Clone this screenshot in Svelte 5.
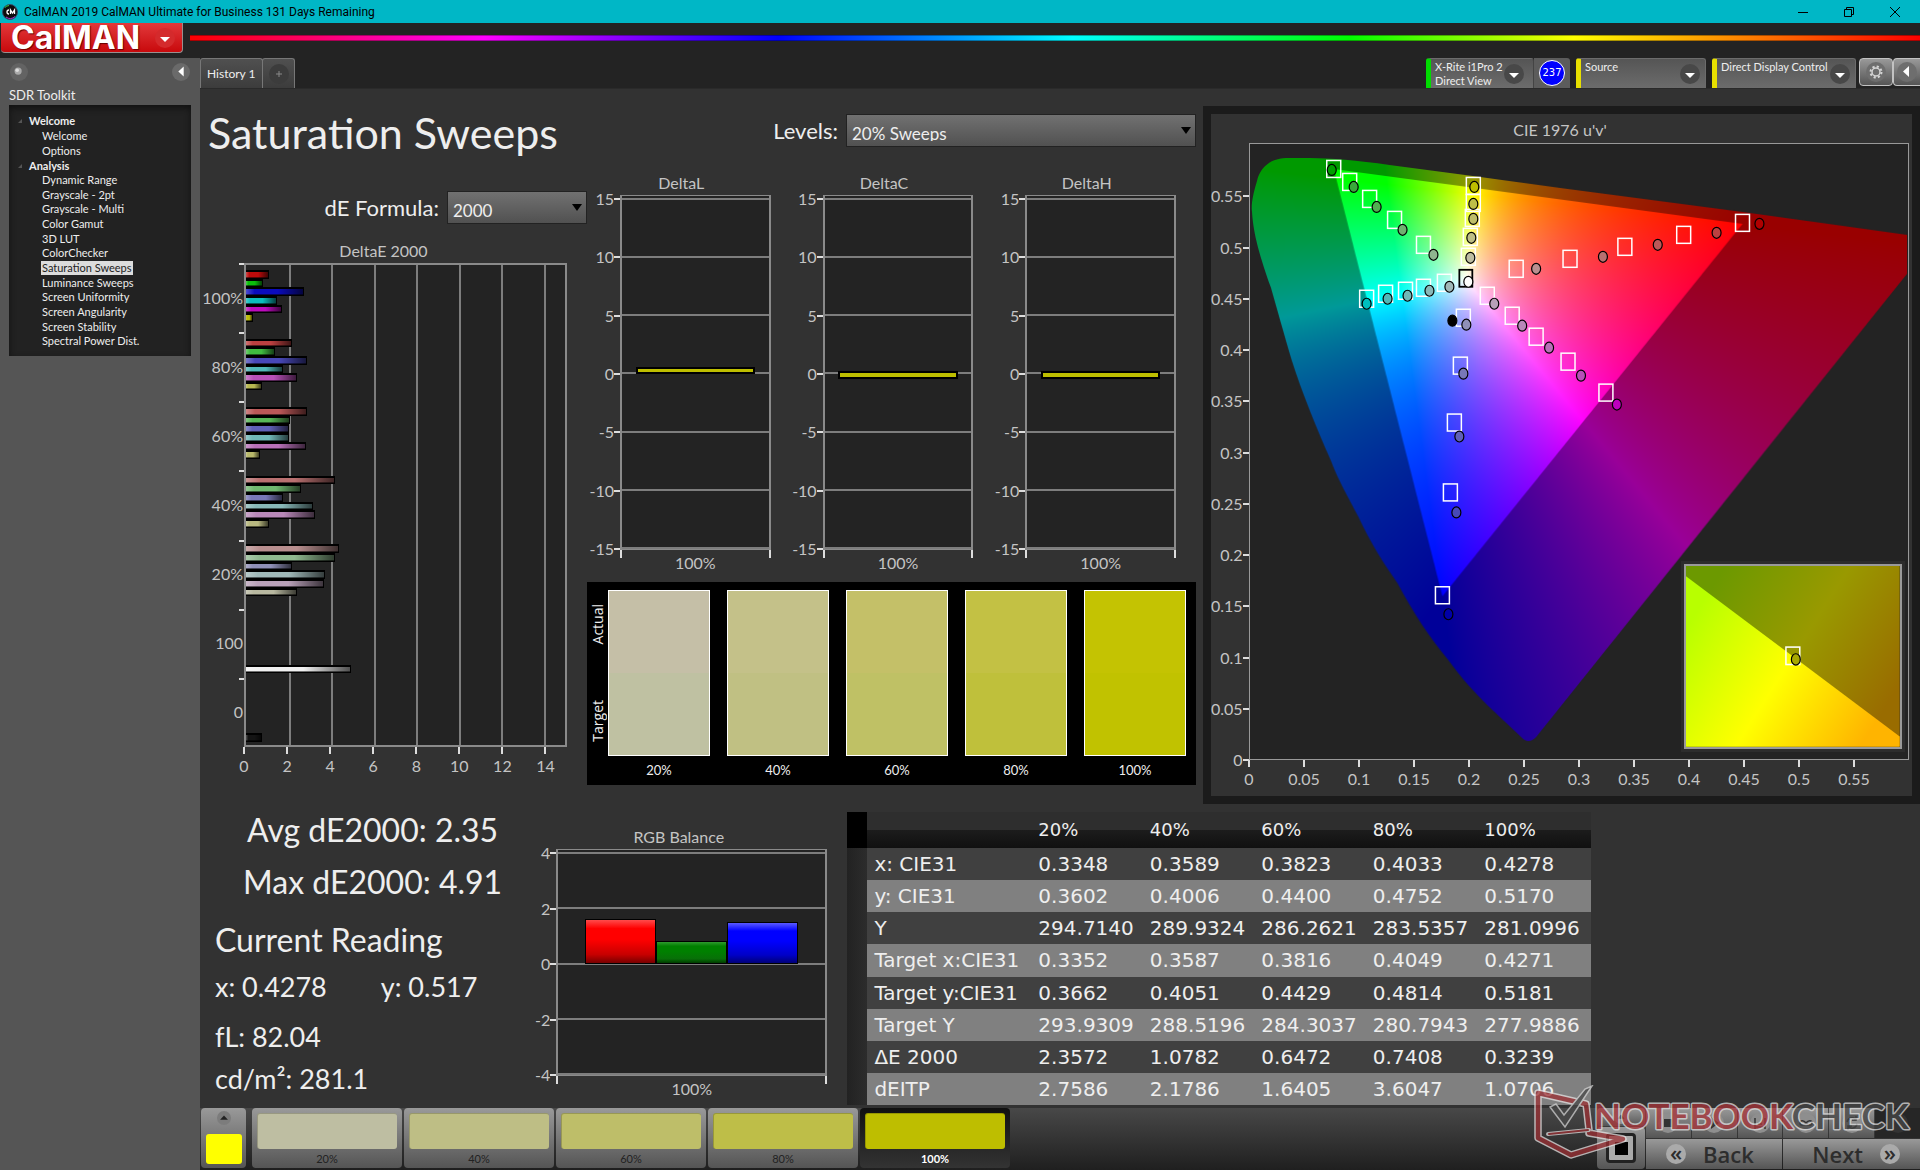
<script>
  const groups = [
    { name: 'Welcome', items: ['Welcome', 'Options'] },
    {
      name: 'Analysis',
      items: [
        'Dynamic Range', 'Grayscale - 2pt', 'Grayscale - Multi', 'Color Gamut', '3D LUT', 'ColorChecker',
        'Saturation Sweeps', 'Luminance Sweeps', 'Screen Uniformity', 'Screen Angularity', 'Screen Stability',
        'Spectral Power Dist.'
      ]
    }
  ];
  const current = 'Saturation Sweeps';

  const deltaE = [
    { label: '100%', bars: [[1.1, '#bd0b0b'], [0.82, '#0bbd0b'], [2.73, '#0b0bbd'], [1.47, '#0bbdbd'], [1.7, '#bd0bbd'], [0.31, '#bdbd0b']] },
    { label: '80%', bars: [[2.17, '#bc4040'], [1.38, '#40bc40'], [2.87, '#4848b8'], [1.75, '#50b8b8'], [2.4, '#b850b8'], [0.77, '#b8b850']] },
    { label: '60%', bars: [[2.87, '#bb5858'], [2.08, '#58b858'], [2.03, '#6060b8'], [2.03, '#70b8b8'], [2.82, '#b870b8'], [0.64, '#b8b86a']] },
    { label: '40%', bars: [[4.17, '#b97070'], [2.59, '#70b870'], [1.75, '#7878b8'], [3.15, '#88b8b8'], [3.24, '#b888b8'], [1.1, '#b8b880']] },
    { label: '20%', bars: [[4.36, '#b98f8f'], [4.17, '#8fb98f'], [2.17, '#9090b8'], [3.7, '#a0b8b8'], [3.66, '#b8a0b8'], [2.4, '#b8b8a0']] },
    { label: '100', bars: [null, null, null, null, null, null, [4.96, '#f0f0f0']] },
    { label: '0', bars: [null, null, null, null, null, null, [0.74, '#141414']] }
  ];

  const deltas = [
    { title: 'DeltaL', from: 0.08, to: 0.45 },
    { title: 'DeltaC', from: -0.4, to: 0.1 },
    { title: 'DeltaH', from: -0.4, to: 0.1 }
  ].map((d) => ({
    title: d.title,
    ticks: [15, 10, 5, 0, -5, -10, -15],
    max: 15,
    bars: [{ left: 10, width: 80, from: d.from, to: d.to, kind: 'yellow' }]
  }));

  const balance = {
    title: 'RGB Balance',
    ticks: [4, 2, 0, -2, -4],
    max: 4,
    bars: [
      { left: 10, width: 26.6, from: 0, to: 1.58, kind: 'red' },
      { left: 36.6, width: 26.6, from: 0, to: 0.8, kind: 'green' },
      { left: 63.2, width: 26.6, from: 0, to: 1.48, kind: 'blue' }
    ]
  };

  const swatches = [
    { label: '20%', actual: '#c5bfa7', target: '#bfc1a2', chip: '#bebea2' },
    { label: '40%', actual: '#c4c189', target: '#c0c083', chip: '#bebe85' },
    { label: '60%', actual: '#c4c068', target: '#bfc165', chip: '#bebe69' },
    { label: '80%', actual: '#c3c144', target: '#bfc03b', chip: '#bebe48' },
    { label: '100%', actual: '#c4c302', target: '#c1c200', chip: '#bebe00' }
  ];

  const rows = [
    ['x: CIE31', '0.3348', '0.3589', '0.3823', '0.4033', '0.4278'],
    ['y: CIE31', '0.3602', '0.4006', '0.4400', '0.4752', '0.5170'],
    ['Y', '294.7140', '289.9324', '286.2621', '283.5357', '281.0996'],
    ['Target x:CIE31', '0.3352', '0.3587', '0.3816', '0.4049', '0.4271'],
    ['Target y:CIE31', '0.3662', '0.4051', '0.4429', '0.4814', '0.5181'],
    ['Target Y', '293.9309', '288.5196', '284.3037', '280.7943', '277.9886'],
    ['ΔE 2000', '2.3572', '1.0782', '0.6472', '0.7408', '0.3239'],
    ['dEITP', '2.7586', '2.1786', '1.6405', '3.6047', '1.0706']
  ];

  const vTicks = ['0.55', '0.5', '0.45', '0.4', '0.35', '0.3', '0.25', '0.2', '0.15', '0.1', '0.05', '0'];
  const uTicks = ['0', '0.05', '0.1', '0.15', '0.2', '0.25', '0.3', '0.35', '0.4', '0.45', '0.5', '0.55'];

  // Marker centres in the diagram's own units: 1096 per u', 1022 per v'.
  const targets = [
    [84, 25], [100, 38], [120, 55], [145, 76], [174, 101],
    [224, 42], [224, 59], [223, 74], [221, 93], [219, 113],
    [117, 155], [136, 150], [156, 147], [174, 144], [195, 139],
    [267, 125], [321, 115], [376, 103], [435, 91], [494, 79],
    [238, 152], [263, 172], [287, 193], [319, 218], [357, 249],
    [214, 174], [211, 222], [205, 279], [201, 349], [193, 452]
  ];
  const readings = [
    [82, 26, '#009e00'], [104, 43, '#3aa83a'], [127, 63, '#50b050'], [153, 86, '#70b070'], [184, 111, '#8fb58f'],
    [225, 43, '#bebe00'], [224, 60, '#bebe48'], [224, 75, '#bebe69'], [222, 94, '#bebe85'], [221, 114, '#bebea2'],
    [117, 160, '#00bebe'], [138, 155, '#50b8b8'], [158, 152, '#70b8b8'], [180, 147, '#88b8b8'], [200, 143, '#a0b8b8'],
    [287, 125, '#b98f8f'], [354, 113, '#b97070'], [409, 101, '#bb5858'], [468, 89, '#bc4040'], [511, 80, '#b00000'],
    [245, 160, '#b8a0b8'], [273, 182, '#b888b8'], [300, 204, '#b870b8'], [332, 232, '#b850b8'], [368, 261, '#bd00bd'],
    [217, 181, '#9090b8'], [214, 230, '#7878b8'], [210, 293, '#6060b8'], [207, 369, '#4848b8'], [199, 471, '#0000a8'],
    [219, 138, '#ffffff'], [203, 177, '#000000']
  ];

  const locus =
    'M36 14 C18 15 10 25 7 37 C3 50 1 60 2 68 C3 85 7 105 21 144 C27 165 34 190 41 214 C53 252 67 285 81 317 ' +
    'C90 340 98 353 109 374 C121 400 134 420 148 440 C164 470 180 494 199 517 C212 535 225 549 238 562 L272 594 ' +
    'Q279 602 287 594 L509 317 L659 130 L659 91 L494 68 L311 44 L231 33 L140 21 Q91 14 60 14 Z';
  const gamut = 'M84 25 L494 80 L193 453 Z';

  let canvas = $state();
  let level = $state('20% Sweeps');
  let formula = $state('2000');

  function chromaticity(width, height, gain) {
    const layer = document.createElement('canvas');
    layer.width = width;
    layer.height = height;
    const ctx = layer.getContext('2d');
    const image = ctx.createImageData(width, height);
    for (let j = 0; j < height; j++) {
      for (let i = 0; i < width; i++) {
        const u = i / 1096;
        const v = (615 - j) / 1022;
        const X = 9 * u;
        const Y = 4 * v;
        const Z = 12 - 3 * u - 20 * v;
        const rgb = [
          3.2406 * X - 1.5372 * Y - 0.4986 * Z,
          -0.9689 * X + 1.8758 * Y + 0.0415 * Z,
          0.0557 * X - 0.204 * Y + 1.057 * Z
        ].map((c) => Math.max(0, c));
        const top = Math.max(...rgb) || 1;
        const at = (j * width + i) * 4;
        for (let k = 0; k < 3; k++) image.data[at + k] = 255 * gain * Math.pow(rgb[k] / top, 0.85);
        image.data[at + 3] = 255;
      }
    }
    ctx.putImageData(image, 0, 0);
    return layer;
  }

  $effect(() => {
    const ctx = canvas.getContext('2d');
    for (const [outline, gain] of [[locus, 0.6], [gamut, 1]]) {
      ctx.save();
      ctx.clip(new Path2D(outline));
      ctx.drawImage(chromaticity(660, 616, gain), 0, 0);
      ctx.restore();
    }
  });
</script>

{#snippet columnChart(chart)}
  <figure class="vchart">
    <figcaption>{chart.title}</figcaption>
    <div class="vaxis">
      {#each chart.ticks as t}<span>{t}</span>{/each}
    </div>
    <div class="vplot">
      <div class="vgrid">
        {#each chart.ticks as t}<i></i>{/each}
        {#each chart.bars as b}
          <b
            class={b.kind}
            style:left="{b.left}%"
            style:width="{b.width}%"
            style:top="{50 - (b.to / chart.max) * 50}%"
            style:bottom="{50 + (b.from / chart.max) * 50}%"
          ></b>
        {/each}
      </div>
    </div>
    <div class="vfoot">100%</div>
  </figure>
{/snippet}

{#snippet chevron()}
  <svg class="knob" viewBox="0 0 20 20" aria-hidden="true">
    <circle cx="10" cy="10" r="10" fill="#484848" /><path d="M5 9h10l-5 5z" fill="#fff" />
  </svg>
{/snippet}

<div class="app">
  <header class="titlebar">
    <svg class="appicon" viewBox="0 0 16 16" aria-hidden="true">
      <circle cx="8" cy="8" r="7.5" fill="#0d0d0d" stroke="#34506b" />
      <path d="M3 3.500a6.500 6.500 0 0 1 4-2" stroke="#3c3" fill="none" /><path d="M13 12.500a6.500 6.500 0 0 1-9 0.500" stroke="#a3c" fill="none" />
      <path d="M7 6a2 2 0 1 0 0 4M8.500 10V6l2 3 2-3v4" stroke="#fff" stroke-width="1.300" fill="none" />
    </svg>
    <span>CalMAN 2019 CalMAN Ultimate for Business 131 Days Remaining</span>
    <div class="winctl">
      <button aria-label="Minimize"><svg viewBox="0 0 12 12"><path d="M1 6.500h10" /></svg></button>
      <button aria-label="Restore"><svg viewBox="0 0 12 12"><path d="M1.500 3.500h7v7h-7zM3.500 3.500v-2h7v7h-2" /></svg></button>
      <button aria-label="Close"><svg viewBox="0 0 12 12"><path d="M1 1l10 10M11 1L1 11" /></svg></button>
    </div>
  </header>

  <div class="brandbar">
    <button class="logo"><span>CalMAN</span>
      <svg viewBox="0 0 20 20" aria-hidden="true"><circle cx="10" cy="10" r="10" fill="#d42a2c" /><path d="M5 9h10l-5 5z" fill="#fff" /></svg>
    </button>
    <div class="rainbow"></div>
  </div>

  <div class="body">
    <aside>
      <div class="knobs">
        <svg viewBox="0 0 20 20" aria-hidden="true"><circle cx="10" cy="10" r="10" fill="#636363" /><circle cx="9" cy="9" r="4" fill="#aaa" /><circle cx="8" cy="8" r="2" fill="#ddd" /></svg>
        <button aria-label="Collapse sidebar"><svg viewBox="0 0 20 20"><circle cx="10" cy="10" r="10" fill="#6a6a6a" /><path d="M13 4v11L7 9.500z" fill="#fff" /></svg></button>
      </div>
      <h2>SDR Toolkit</h2>
      <nav>
        {#each groups as g}
          <h3><svg viewBox="0 0 6 6" aria-hidden="true"><path d="M5 1v4H1z" fill="#555" /></svg>{g.name}</h3>
          <ul>
            {#each g.items as item}
              <li><a href="#top" class:current={item === current}>{item}</a></li>
            {/each}
          </ul>
        {/each}
      </nav>
    </aside>

    <main>
      <div class="tabbar">
        <button class="tab">History 1</button>
        <button class="tab plus" aria-label="New tab"><svg viewBox="0 0 20 20"><circle cx="10" cy="10" r="10" fill="#3c3c3c" /><path d="M7 10h6M10 7v6" stroke="#888" /></svg></button>
        <div class="devices">
          <button class="device ready"><span>X-Rite i1Pro 2<br />Direct View</span>{@render chevron()}</button>
          <div class="count"><b>237</b></div>
          <button class="device source"><span>Source</span>{@render chevron()}</button>
          <button class="device display"><span>Direct Display Control</span>{@render chevron()}</button>
          <button class="square" aria-label="Settings">
            <svg viewBox="0 0 20 20"><circle cx="10" cy="10" r="10" fill="#6e6e6e" /><circle cx="10" cy="10" r="4" fill="none" stroke="#d5d5d5" stroke-width="1.500" /><circle cx="10" cy="10" r="5.500" fill="none" stroke="#d5d5d5" stroke-width="2" stroke-dasharray="2.200 2.120" /></svg>
          </button>
          <button class="square last" aria-label="Collapse devices">
            <svg viewBox="0 0 20 20"><circle cx="10" cy="10" r="10" fill="#6e6e6e" /><path d="M12 4v11L6 9.500z" fill="#fff" /></svg>
          </button>
        </div>
      </div>

      <div class="upper">
        <section class="sweeps">
          <h1>Saturation Sweeps</h1>
          <div class="field formula">
            <label for="formula">dE Formula:</label>
            <div class="select"><select id="formula" bind:value={formula}><option>2000</option></select></div>
          </div>
          <figure class="hchart">
            <figcaption>DeltaE 2000</figcaption>
            <div class="cats">
              {#each deltaE as c}<span>{c.label}</span>{/each}
            </div>
            <div class="hplot">
              <div class="hgrid">{#each Array(8) as _}<i></i>{/each}</div>
              <div class="hbars">
                {#each deltaE as c}
                  <div class="cat">
                    {#each c.bars as b}
                      {#if b}
                        <b style:width="{(b[0] / 15) * 100}%" style:background-color={b[1]}></b>
                      {:else}
                        <b class="none"></b>
                      {/if}
                    {/each}
                  </div>
                {/each}
              </div>
            </div>
            <div class="haxis">
              {#each [0, 2, 4, 6, 8, 10, 12, 14] as t}<span>{t}</span>{/each}
            </div>
          </figure>
        </section>

        <section class="deltas">
          <div class="field levels">
            <label for="levels">Levels:</label>
            <div class="select"><select id="levels" bind:value={level}><option>20% Sweeps</option></select></div>
          </div>
          <div class="trio">
            {#each deltas as d}{@render columnChart(d)}{/each}
          </div>
          <div class="compare">
            <div class="side"><span>Actual</span><span>Target</span></div>
            {#each swatches as s}
              <div class="swatch">
                <div class="pair"><i style:background={s.actual}></i><i style:background={s.target}></i></div>
                {s.label}
              </div>
            {/each}
          </div>
        </section>

        <figure class="cie">
          <figcaption>CIE 1976 u'v'</figcaption>
          <div class="vaxis">{#each vTicks as t}<span>{t}</span>{/each}</div>
          <div class="diagram">
            <canvas bind:this={canvas} width="660" height="616"></canvas>
            <svg viewBox="0 0 660 616" preserveAspectRatio="none" aria-hidden="true">
              {#each targets as [x, y]}
                <rect x={x - 7} y={y - 8.5} width="14" height="17" fill="none" stroke="#fff" stroke-width="1.500" />
              {/each}
              <rect x="210" y="126" width="13" height="17" fill="none" stroke="#000" stroke-width="1.800" />
              {#each readings as [x, y, fill]}
                <ellipse cx={x} cy={y} rx="4.500" ry="5.500" {fill} stroke="#000" stroke-width="1.200" />
              {/each}
            </svg>
            <div class="inset">
              <svg viewBox="0 0 216 176" preserveAspectRatio="none" aria-hidden="true">
                <defs>
                  <linearGradient id="lit" gradientUnits="userSpaceOnUse" x1="20" y1="30" x2="196" y2="146">
                    <stop offset="0" stop-color="#b8ff00" /><stop offset=".5" stop-color="#ffff00" /><stop offset="1" stop-color="#ffb400" />
                  </linearGradient>
                  <linearGradient id="dim" gradientUnits="userSpaceOnUse" x1="20" y1="30" x2="196" y2="146">
                    <stop offset="0" stop-color="#6c9900" /><stop offset=".5" stop-color="#999900" /><stop offset="1" stop-color="#996c00" />
                  </linearGradient>
                </defs>
                <rect width="216" height="176" fill="url(#dim)" />
                <path d="M0 10L216 166V176H0Z" fill="url(#lit)" />
                <rect x="101" y="79" width="14" height="17" fill="none" stroke="#fff" stroke-width="1.500" />
                <ellipse cx="111" cy="91" rx="4.500" ry="5.500" fill="#a8a800" stroke="#000" stroke-width="1.200" />
              </svg>
            </div>
          </div>
          <div class="haxis">{#each uTicks as t}<span>{t}</span>{/each}</div>
        </figure>
      </div>

      <div class="lower">
        <section class="stats">
          <p class="big mid">Avg dE2000: 2.35</p>
          <p class="big mid">Max dE2000: 4.91</p>
          <h2 class="big">Current Reading</h2>
          <p class="pairline"><span>x: 0.4278</span><span>y: 0.517</span></p>
          <p class="gap">fL: 82.04</p>
          <p>cd/m²: 281.1</p>
        </section>
        <section class="balance">{@render columnChart(balance)}</section>
        <table>
          <thead>
            <tr><td class="grip"></td><th></th>{#each swatches as s}<th scope="col">{s.label}</th>{/each}</tr>
          </thead>
          <tbody>
            {#each rows as r}
              <tr><td class="grip"></td><th scope="row">{r[0]}</th>{#each r.slice(1) as v}<td>{v}</td>{/each}</tr>
            {/each}
          </tbody>
        </table>
      </div>

      <footer>
        <button class="picker" aria-label="Pick colour">
          <svg viewBox="0 0 16 16"><circle cx="8" cy="8" r="8" fill="#7c7c7c" /><path d="M3.500 10h9L8 5z" fill="#222" /></svg>
          <i></i>
        </button>
        {#each swatches as s, n}
          <button class="chip" class:on={n === 4}><i style:background={s.chip}></i>{s.label}</button>
        {/each}
        <div class="transport">
          <div class="stopcol">
            <button class="upbtn" aria-label="Expand"><svg viewBox="0 0 16 16"><circle cx="8" cy="8" r="8" fill="#909090" /><path d="M4 10h8L8 5z" fill="#333" /></svg></button>
            <button class="stop" aria-label="Stop"><i></i></button>
          </div>
          <div class="keys">
            <button aria-label="Stop reading"><svg viewBox="0 0 20 20"><circle cx="10" cy="10" r="10" /><path d="M6 6h8v8H6z" fill="#333" /></svg></button>
            <button aria-label="Play"><svg viewBox="0 0 20 20"><circle cx="10" cy="10" r="10" /><path d="M7 4l8 6-8 6z" fill="#333" /></svg></button>
            <button aria-label="Read series"><svg viewBox="0 0 20 20"><circle cx="10" cy="10" r="10" /><path d="M5 5v11M15 5v11M5 14h10M8 11h4" stroke="#333" stroke-width="1.500" fill="none" /></svg></button>
            <button aria-label="Continuous"><svg viewBox="0 0 20 20"><circle cx="10" cy="10" r="10" /><path d="M10 10c-2-3-6-3-6 0s4 3 6 0 6-3 6 0-4 3-6 0z" stroke="#333" stroke-width="1.500" fill="none" /></svg></button>
            <button aria-label="Repeat"><svg viewBox="0 0 20 20"><circle cx="10" cy="10" r="10" /><path d="M5 9a5 5 0 0 1 9-2M15 11a5 5 0 0 1-9 2M14 3v4h-4M6 17v-4h4" stroke="#333" stroke-width="1.500" fill="none" /></svg></button>
            <button class="off" aria-label="More"><svg viewBox="0 0 20 20"><circle cx="10" cy="10" r="10" /></svg></button>
            <button class="wide back"><em>«</em>Back</button>
            <button class="wide next">Next<em>»</em></button>
          </div>
          <svg class="mark" viewBox="0 0 384 80" aria-hidden="true">
            <g fill="none" stroke-linejoin="round" stroke-linecap="round">
              <g stroke="#e4e0e0" stroke-width="7.500">
                <path d="M9 8L9 53 42 70 94 54 60 48M9 8L57 19 60 45" />
              </g>
              <path d="M9 8L9 53 42 70 94 54 60 48M9 8L57 19 60 45" stroke="#9c3034" stroke-width="4.500" />
              <path d="M19 49L60 45" stroke="#ddd" stroke-width="4" />
              <path d="M20 49L59 45" stroke="#9c3034" stroke-width="2" />
            </g>
            <path d="M21 22L27 19 35 30 56 4 63 1 36 42Z" fill="#484848" stroke="#d0d0d0" stroke-width="1.500" />
            <text x="65" y="44"><tspan class="red">NOTEBOOK</tspan><tspan class="dark">CHECK</tspan></text>
          </svg>
        </div>
      </footer>
    </main>
  </div>
</div>

<style>
  :global(body) { margin: 0; background: #232323; }
  * { box-sizing: border-box; }
  button, select { font: inherit; color: inherit; border: 0; padding: 0; margin: 0; background: none; }
  h1, h2, h3, p, ul, figure { margin: 0; padding: 0; font-weight: 400; }
  i, b, em { font-style: normal; display: block; }
  svg { display: block; }

  .app {
    --face: Lato, sans-serif;
    --line: #8a8a8a;
    min-height: 100vh;
    display: flex;
    flex-direction: column;
    background: #232323;
    color: #eee;
    font: 11px/15px var(--face);
  }

  .titlebar { display: flex; align-items: center; height: 23px; background: #00b7c6; color: #000; font: 12px/16px Roboto, sans-serif; padding: 0 2px; gap: 6px; }
  .appicon { width: 16px; height: 16px; }
  .winctl { margin-left: auto; display: flex; }
  .winctl button { width: 46px; height: 22px; display: grid; place-items: center; }
  .winctl svg { width: 12px; height: 12px; fill: none; stroke: #000; }

  .brandbar { display: flex; height: 35px; padding-left: 1px; gap: 7px; }
  .logo { width: 182px; height: 30px; display: flex; align-items: center; justify-content: space-between; padding: 0 7px 0 10px; background: linear-gradient(#e2393b, #c8090c); border: solid #9a8f8f; border-width: 0 1px 1px 0; border-radius: 0 0 4px 4px; font: 700 32px/28px Inter, sans-serif; color: #fff; text-shadow: 1px 1px 1px #600; }
  .logo svg { width: 20px; height: 20px; }
  .rainbow { flex: 1; height: 6px; margin-top: 12px; background: linear-gradient(90deg, red, #f0f 17%, #00f 34%, #0ff 51%, #0f0 67%, #ff0 80%, red); border: solid #0005; border-width: 1px 0; }

  .body { flex: 1; display: flex; }
  aside { width: 200px; flex: none; padding: 5px 9px; background: #555; }
  .knobs { display: flex; justify-content: space-between; height: 18px; }
  .knobs svg { width: 20px; height: 18px; }
  aside h2 { font-size: 13px; line-height: 20px; padding-top: 4px; }
  nav { background: #222; box-shadow: inset 0 3px 6px #111; padding: 8px 0 7px; }
  nav h3 { font-size: 11px; line-height: 15px; font-weight: 700; display: flex; align-items: center; gap: 6px; padding-left: 8px; }
  nav h3 svg { width: 6px; height: 6px; }
  ul { list-style: none; padding-left: 32px; }
  ul:last-child { height: 176px; display: grid; grid-auto-rows: 1fr; line-height: 14px; }
  a { color: inherit; text-decoration: none; padding: 0 1px; display: inline-block; }
  a.current { background: #dcdcdc; color: #222; }

  main { flex: 1; min-width: 0; display: flex; flex-direction: column; background: #323232; }
  .tabbar { display: flex; height: 30px; background: #232323; }
  .tab { height: 30px; padding: 0 6px; border: solid #777; border-width: 1px 1px 0 1px; border-radius: 3px 3px 0 0; background: linear-gradient(#505050, #3c3c3c); font-size: 12px; }
  .plus { width: 33px; margin-left: -1px; }
  .plus svg { width: 20px; height: 20px; }
  .devices { margin-left: auto; display: flex; }
  .device { display: flex; justify-content: space-between; height: 30px; width: 130px; padding: 1px 5px 0 4px; border: solid #6c6c6c; border-width: 1px 1px 0 0; border-left: 5px solid #e8e000; border-radius: 3px 3px 0 0; background: linear-gradient(#555, #6c6c6c); text-align: left; line-height: 14px; white-space: nowrap; margin-left: 6px; }
  .device.ready { width: 108px; padding-right: 9px; border-left-color: #00dc00; border-right-color: #444; margin: 0; }
  .device.display { width: 144px; }
  .knob { width: 20px; height: 20px; margin-top: 4px; flex: none; }
  .count { width: 36px; display: grid; place-items: center; background: #5c5c5c; border-radius: 0 3px 0 0; }
  .count b { width: 26px; height: 26px; border-radius: 13px; border: 1px solid #fff; background: #00f; color: #fff; font: 10px/24px "DejaVu Sans", sans-serif; text-align: center; }
  .square { width: 34px; height: 28px; margin-left: 3px; display: grid; place-items: center; border: 1px solid #c2c2c2; border-radius: 4px; background: linear-gradient(#999, #555); }
  .square svg { width: 20px; height: 20px; }
  .square.last { width: 27px; margin-left: 0; border-right: 0; border-radius: 4px 0 0 4px; }

  .upper { flex: 1; display: grid; grid-template-columns: minmax(0, 387fr) minmax(0, 616fr) minmax(0, 717fr); border-top: 1px solid #2a2a2a; }
  .sweeps { display: flex; flex-direction: column; padding: 14px 0 27px; }
  h1 { font: 43px/60px var(--face); padding-left: 8px; white-space: nowrap; }
  .field { display: flex; align-items: center; gap: 8px; font-family: var(--face); }
  .field label { font-size: 22px; line-height: 33px; white-space: nowrap; }
  .select { position: relative; height: 33px; }
  .select::after { content: ""; position: absolute; right: 5px; top: 13px; border: solid transparent; border-width: 7px 5px 0; border-top-color: #000; }
  select { appearance: none; width: 100%; height: 33px; padding: 5px 5px 0; font-size: 17px; border: 1px solid #222; background: linear-gradient(#717171, #515151); border-radius: 0; }
  .formula { margin-top: 28px; justify-content: flex-end; }
  .formula .select { width: 140px; }

  figcaption, .vaxis, .haxis, .cats, .vfoot { font: 16px/20px var(--face); color: #c4c4c4; }
  figcaption { text-align: center; grid-column: 1 / -1; }
  .hchart { flex: 1; margin-top: 17px; display: grid; grid-template: 22px 1fr 30px / 44px 1fr; padding-right: 20px; }
  .cats { display: grid; grid-template-rows: repeat(7, 1fr); text-align: right; align-items: center; background: repeating-linear-gradient(#ddd 0 2px, transparent 2px calc(100% / 7)) right / 5px 100% no-repeat; }
  .cats span { padding-right: 1px; }
  .hplot { position: relative; display: grid; background: #232323; border: 2px solid var(--line); }
  .hgrid, .hbars { grid-area: 1 / 1; display: grid; }
  .hgrid { grid-template-columns: repeat(7, 2fr) 1fr; }
  .hgrid i + i { border-left: 2px solid #7d7d7d; }
  .hbars { grid-template-rows: repeat(7, 1fr); }
  .cat { display: grid; grid-template-rows: repeat(7, 1fr); padding: 5px 0 3px; }
  .cat b { border: 1px solid #000; border-left: 0; box-shadow: inset 0 1px #000, inset 0 -1px #0008; background-image: linear-gradient(90deg, #fff4, #fff0 15%, #0000 55%, #000a); }
  .cat .none { visibility: hidden; }
  .haxis { display: grid; grid-column: 2; }
  .haxis span { width: 0; display: flex; flex-direction: column; align-items: center; }
  .haxis span::before { content: ""; width: 2px; height: 7px; margin-bottom: 2px; background: #ddd; flex: none; }
  .hchart .haxis { grid-template-columns: repeat(7, 2fr) 1fr; }

  .deltas { display: flex; flex-direction: column; padding: 25px 7px 19px 0; }
  .levels { justify-content: flex-end; }
  .levels .select { width: 350px; }
  .trio { flex: 1; display: grid; grid-template-columns: repeat(3, 1fr); column-gap: 24px; margin: 24px 20px 4px 5px; }
  .vchart { height: 100%; display: grid; grid-template: 24px 1fr 28px / 28px 1fr; }
  .trio figcaption { padding-top: 2px; }
  .vaxis { display: flex; flex-direction: column; justify-content: space-between; padding: 4px 0 1px; }
  .vaxis span { height: 0; display: flex; align-items: center; justify-content: flex-end; }
  .vaxis span::after { content: ""; width: 6px; height: 2px; background: #ddd; flex: none; }
  .vplot { background: #232323; border: 1px solid var(--line); border-width: 1px 2px; padding-top: 2px; }
  .vgrid { position: relative; height: 100%; display: flex; flex-direction: column; justify-content: space-between; }
  .vgrid i { height: 2px; background: #7d7d7d; }
  .vgrid b { position: absolute; border: 1px solid #000; }
  .yellow { background: #bebe00; box-shadow: 0 0 0 1px #000; }
  .red { background: linear-gradient(#ff4b4b, #f00 20% 45%, #c80000 80%, #700); }
  .green { background: linear-gradient(#2f9a2f, #008000 20% 45%, #087008 80%, #003c00); }
  .blue { background: linear-gradient(#5a5aff, #00f 20% 45%, #0000c8 80%, #007); }
  .vfoot { grid-column: 2; text-align: center; padding-top: 3px; background: linear-gradient(#ddd, #ddd) left top / 2px 8px no-repeat, linear-gradient(#ddd, #ddd) right top / 2px 8px no-repeat; }

  .compare { display: flex; background: #000; height: 203px; padding: 8px 10px 0 0; gap: 17px; }
  .side { width: 21px; margin-right: -17px; height: 166px; padding: 14px 0; display: flex; flex-direction: column; justify-content: space-between; align-items: center; font: 500 14px/16px "Open Sans", sans-serif; }
  .side span { writing-mode: vertical-rl; rotate: 180deg; }
  .swatch { flex: 1; text-align: center; font: 13px/28px var(--face); }
  .pair { height: 166px; border: 1px solid #fff; display: flex; flex-direction: column; }
  .pair i { flex: 1; }

  .cie { display: grid; grid-template: 29px 1fr 36px / 38px 1fr; margin: 17px 0 0; border: 8px solid #1b1b1b; background: #323232; padding-right: 3px; }
  .cie figcaption { padding-top: 6px; }
  .cie .vaxis { display: grid; grid-template-rows: 53fr repeat(11, 51fr); padding: 0; align-items: end; }
  .cie .haxis { grid-template-columns: repeat(12, 1fr); }
  .diagram { position: relative; background: #232323; border: 1px solid #999; min-height: 0; }
  .diagram > canvas, .diagram > svg { position: absolute; inset: 0; width: 100%; height: 100%; }
  .inset { position: absolute; right: 3px; bottom: 7px; width: 34%; height: 31%; border: 3px solid #2c2c2c; }
  .inset svg { width: 100%; height: 100%; border: 2px solid #999; }

  .lower { height: 304px; display: grid; grid-template-columns: 330fr 317fr 743fr 329fr; }
  .stats { font: 27px/42px var(--face); white-space: nowrap; padding: 0 0 0 15px; }
  .stats .big { font-size: 32px; line-height: 52px; }
  .stats .mid { text-align: center; }
  .stats h2 { margin-top: 6px; }
  .pairline { display: flex; gap: 54px; }
  .stats .gap { margin-top: 8px; }
  .balance { padding: 23px 20px 4px 0; }
  .balance .vchart { grid-template: 22px 1fr 28px / 26px 1fr; }
  table { border-collapse: collapse; height: 293px; margin-top: 8px; table-layout: fixed; width: 100%; font: 20px/24px "DejaVu Sans", sans-serif; white-space: nowrap; }
  th, td { text-align: left; font-weight: 400; padding: 0; width: 15%; }
  tr { background: #404040; height: 32px; }
  tr:nth-child(even) { background: #808080; }
  thead tr { height: 36px; background: linear-gradient(#2e2e2e 50%, #1c1c1c 50%, #101010); font-size: 18px; }
  th:nth-child(2) { padding-left: 7px; width: 23%; }
  th:last-child { width: auto; }
  .grip { width: 20px; background: linear-gradient(90deg, #222, #2c2c2c); }
  thead .grip { background: #000; }

  footer { height: 62px; display: flex; align-items: flex-start; background: linear-gradient(#484848, #1f1f1f); }
  footer button { background: linear-gradient(#999, #555); border-radius: 4px; }
  .picker { width: 45px; height: 60px; margin: 0 6px 0 1px; display: flex; flex-direction: column; align-items: center; justify-content: space-between; padding: 3px 0 4px; }
  .picker svg { width: 14px; height: 14px; }
  .picker i { width: 36px; height: 30px; background: #ff0; border-radius: 3px; }
  .chip { width: 150px; height: 60px; margin-right: 2px; padding: 5px 5px 0; color: #222; font: 11px/20px var(--face); }
  .chip i { height: 36px; border-radius: 3px; border: solid #0003; border-width: 1px 0 0 1px; }
  footer .chip.on { background: linear-gradient(#111, #333); color: #fff; font-weight: 700; }
  .transport { position: relative; margin-left: auto; display: flex; gap: 1px; width: 323px; height: 61px; }
  .stopcol { width: 48px; display: grid; grid-template-rows: 18px 42px; gap: 1px; }
  .stopcol button { display: grid; place-items: center; }
  .upbtn svg { width: 16px; height: 14px; }
  .stop i { width: 30px; height: 30px; border: 3px solid #222; border-radius: 4px; background: linear-gradient(#000, #000) center / 13px 13px no-repeat #aaa; }
  .keys { flex: 1; display: grid; grid-template: 30px 30px / repeat(6, 1fr); gap: 1px; }
  .keys button { display: grid; place-items: center; border-radius: 0; }
  .keys svg { width: 20px; height: 20px; fill: #8e8e8e; }
  .keys .off { background: #262626; }
  .off svg { fill: #333; }
  .keys .wide { grid-column: span 3; display: flex; align-items: center; gap: 17px; padding: 0 20px; color: #2d2d2d; font: 600 22px/28px "Open Sans", sans-serif; }
  .keys .next { justify-content: flex-end; }
  .wide em { width: 20px; height: 20px; border-radius: 10px; background: #aaa; line-height: 17px; text-align: center; }
  .mark { position: absolute; left: -68px; top: -23px; width: 384px; height: 80px; opacity: .75; pointer-events: none; }
  .mark text { font: 700 35px Lato, sans-serif; paint-order: stroke; stroke: #ddd; stroke-width: 3; stroke-linejoin: round; }
  .mark .red { fill: #a83338; }
  .mark .dark { fill: #444; }
</style>
